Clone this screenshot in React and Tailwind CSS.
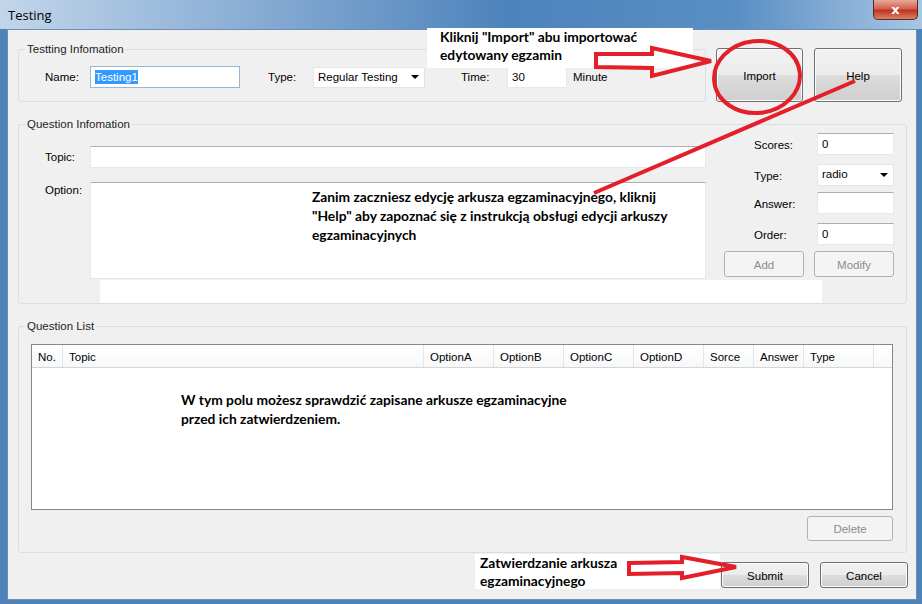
import React from "react";

const btnOn =
  "flex items-center justify-center pt-[3px] rounded-[3px] border border-[#707070] bg-[linear-gradient(to_bottom,#f2f2f2_0%,#ebebeb_50%,#dddddd_50%,#cfcfcf_100%)] shadow-[inset_0_0_0_1px_#fbfbfb] text-black";
const btnOff =
  "flex items-center justify-center pt-[3px] rounded-[3px] border border-[#adb2b5] bg-[#f4f4f4] text-[#8d8d8d]";
const box = "h-[22px] bg-white border border-[#e3e9ef] border-t-[#abadb3] px-[4px] leading-[20px]";
const legend = "ml-[6px] px-[2px] leading-[14px] text-[#1e1e1e]";
const group = "rounded-[3px] border border-[#d5dfe5]";
const note = "font-['Lato','Liberation_Sans',sans-serif] font-bold text-[13.8px]";

const Caret = () => (
  <svg width="8" height="4" viewBox="0 0 8 4" className="mr-[5px]">
    <path d="M0 0 L8 0 L4 4 Z" fill="#000" />
  </svg>
);

const columns = [
  { name: "No.", w: "w-[31px]" },
  { name: "Topic", w: "w-[361px]" },
  { name: "OptionA", w: "w-[70px]" },
  { name: "OptionB", w: "w-[70px]" },
  { name: "OptionC", w: "w-[70px]" },
  { name: "OptionD", w: "w-[70px]" },
  { name: "Sorce", w: "w-[50px]" },
  { name: "Answer", w: "w-[50px]" },
  { name: "Type", w: "w-[70px]" },
];

const App = () => {
  return (
    <div className="relative w-[922px] h-[604px] overflow-hidden bg-[#4f82b9] font-['Liberation_Sans',Arial,sans-serif] text-[11.5px] text-black">
      {/* Title bar */}
      <div className="h-[29px] flex items-start justify-between bg-[linear-gradient(90deg,#c2d6ea_0%,#8db0d6_25%,#4d83bb_55%,#5a8fc4_80%,#a8c6e4_100%)]">
        <span className="ml-[8px] mt-[7px] text-[13px] leading-[16px] text-black font-['Open_Sans',sans-serif]">Testing</span>
        <div className="mr-[4px] w-[45px] h-[20px] rounded-b-[5px] border border-t-0 border-[#5a2a22] bg-[linear-gradient(to_bottom,#e9a99a_0%,#d1624f_45%,#c0341c_55%,#d9826c_100%)] flex items-center justify-center">
          <span className="text-white font-bold text-[13px] leading-none font-['DejaVu_Sans',sans-serif]">x</span>
        </div>
      </div>

      {/* Client area */}
      <div className="ml-[7px] w-[910px] h-[571px] bg-[#f0f0f0] border border-[#6d8fb3] pl-[10px] flex flex-col">
        {/* Row 1 */}
        <div className="mt-[12px] flex items-end">
          <fieldset className={`${group} w-[688px] h-[60px]`}>
            <legend className={legend}>Testting Infomation</legend>
            <div className="mt-[10px] ml-[26px] flex items-center">
              <span className="w-[45px] pt-[2px]">Name:</span>
              <div className="w-[150px] h-[22px] bg-white border border-[#98b5d6] px-[4px] flex items-center">
                <span className="bg-[#3399ff] text-white leading-[14px]">Testing1</span>
              </div>
              <span className="ml-[28px] w-[45px] pt-[2px]">Type:</span>
              <div className="w-[112px] h-[21px] bg-white border border-[#e5e5e5] pl-[4px] flex items-center justify-between">
                <span className="pt-[1px]">Regular Testing</span>
                <Caret />
              </div>
              <span className="ml-[36px] w-[46px] pt-[2px]">Time:</span>
              <div className={`${box} w-[60px]`}>30</div>
              <span className="ml-[6px] pt-[2px]">Minute</span>
            </div>
          </fieldset>
          <div className={`${btnOn} ml-[10px] w-[87px] h-[54px]`}>Import</div>
          <div className={`${btnOn} ml-[11px] w-[88px] h-[54px]`}>Help</div>
        </div>

        {/* Row 2 */}
        <fieldset className={`${group} mt-[15px] w-[889px] h-[187px]`}>
          <legend className={legend}>Question Infomation</legend>
          <div className="flex">
            <div className="ml-[26px] mt-[15px] flex flex-col">
              <div className="flex items-center">
                <span className="w-[45px] pt-[2px]">Topic:</span>
                <div className={`${box} w-[616px]`}></div>
              </div>
              <div className="mt-[14px] flex items-start">
                <span className="w-[45px]">Option:</span>
                <div className="w-[616px] h-[97px] bg-white border border-[#e3e9ef] border-t-[#abadb3]"></div>
              </div>
            </div>
            <div className="ml-[18px] mt-[2px] w-[170px] flex flex-col">
              <div className="flex items-center">
                <span className="ml-[30px] w-[63px] pt-[3px]">Scores:</span>
                <div className={`${box} w-[77px]`}>0</div>
              </div>
              <div className="mt-[9px] flex items-center">
                <span className="ml-[30px] w-[63px] pt-[3px]">Type:</span>
                <div className="w-[77px] h-[22px] bg-white border border-[#e5e5e5] pl-[4px] flex items-center justify-between">
                  <span>radio</span>
                  <Caret />
                </div>
              </div>
              <div className="mt-[6px] flex items-center">
                <span className="ml-[30px] w-[63px] pt-[3px]">Answer:</span>
                <div className={`${box} w-[77px]`}></div>
              </div>
              <div className="mt-[9px] flex items-center">
                <span className="ml-[30px] w-[63px] pt-[3px]">Order:</span>
                <div className={`${box} w-[77px]`}>0</div>
              </div>
              <div className="mt-[6px] flex">
                <div className={`${btnOff} w-[80px] h-[26px]`}>Add</div>
                <div className={`${btnOff} ml-[10px] w-[80px] h-[26px]`}>Modify</div>
              </div>
            </div>
          </div>
        </fieldset>

        {/* Row 3 */}
        <fieldset className={`${group} mt-[15px] w-[889px] h-[234px]`}>
          <legend className={legend}>Question List</legend>
          <div className="ml-[12px] mt-[11px] w-[862px] h-[166px] bg-white border border-[#828790]">
            <div className="h-[23px] flex border-b border-[#d5d5d5] bg-[linear-gradient(to_bottom,#ffffff,#f7f8f9)]">
              {columns.map((c) => (
                <div key={c.name} className={`${c.w} pl-[6px] pt-[1px] leading-[22px] border-r border-[#e3e5e8]`}>
                  {c.name}
                </div>
              ))}
            </div>
          </div>
          <div className="mt-[6px] ml-[788px] flex">
            <div className={`${btnOff} w-[86px] h-[25px]`}>Delete</div>
          </div>
        </fieldset>

        {/* Bottom buttons */}
        <div className="mt-[9px] flex justify-end pr-[8px]">
          <div className={`${btnOn} w-[88px] h-[26px]`}>Submit</div>
          <div className={`${btnOn} ml-[11px] w-[88px] h-[26px]`}>Cancel</div>
        </div>
      </div>

      {/* Annotations */}
      <div className="absolute left-[100px] top-[280px] w-[722px] h-[23px] bg-white"></div>
      <div className={`absolute left-[427px] top-[28px] w-[266px] h-[40px] bg-white pl-[13px] leading-[18px] ${note}`}>
        <div>Kliknij "Import" abu importować</div>
        <div>edytowany egzamin</div>
      </div>
      <div className={`absolute left-[312px] top-[187px] leading-[19px] ${note}`}>
        <div>Zanim zaczniesz edycję arkusza egzaminacyjnego, kliknij</div>
        <div>"Help" aby zapoznać się z instrukcją obsługi edycji arkuszy</div>
        <div>egzaminacyjnych</div>
      </div>
      <div className={`absolute left-[181px] top-[390px] leading-[19px] ${note}`}>
        <div>W tym polu możesz sprawdzić zapisane arkusze egzaminacyjne</div>
        <div>przed ich zatwierdzeniem.</div>
      </div>
      <div className={`absolute left-[475px] top-[554px] w-[245px] h-[35px] bg-white pl-[5px] leading-[18px] ${note}`}>
        <div>Zatwierdzanie arkusza</div>
        <div>egzaminacyjnego</div>
      </div>

      <svg className="absolute left-0 top-0 pointer-events-none" width="922" height="604" viewBox="0 0 922 604">
        <g fill="none" stroke="#e3202a" strokeWidth="4" strokeLinejoin="miter">
          <polygon points="596,54 652,54 652,48 711,61 652,76 652,68 596,67" />
          <ellipse cx="757" cy="77" rx="43" ry="36" transform="rotate(-6 757 77)" />
          <line x1="855" y1="81" x2="594" y2="193" />
          <polygon points="629,563 682,562 682,557 736,567 682,578 682,573 629,574" />
        </g>
      </svg>
    </div>
  );
};

export default App;
